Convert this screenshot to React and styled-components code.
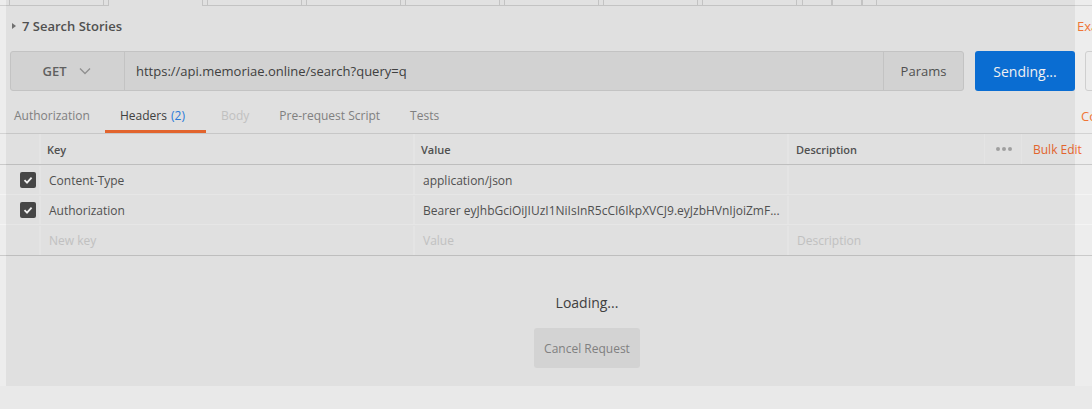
import React from "react";
import styled, { createGlobalStyle } from "styled-components";

const GlobalStyle = createGlobalStyle`
	html, body {
		margin: 0;
		padding: 0;
		overflow: hidden;
		background: #ededed;
	}
	body {
		width: 1092px;
		height: 409px;
		font-family: "Open Sans", "Liberation Sans", sans-serif;
	}
`;

const Page = styled.div`
	position: relative;
	width: 1174px;
	height: 409px;
	background: #ededed;
	color: #555;
`;

const Overlay = styled.div`
	position: absolute;
	left: 6px;
	top: 0;
	width: 1069px;
	height: 386px;
	background: rgba(0, 0, 0, 0.055);
	pointer-events: none;
`;

const TabStrip = styled.div`
	display: flex;
	height: 6px;
	padding-left: 9px;
	box-shadow: inset 0 -1px 0 #cfcfcf;
`;

const WindowTab = styled.div`
	box-sizing: border-box;
	flex: 0 0 ${(p) => p.$w}px;
	margin-right: ${(p) => p.$gap || 0}px;
	height: 6px;
	border-left: 1px solid #cfcfcf;
	border-right: 1px solid #cfcfcf;
	border-bottom: ${(p) => (p.$active ? "none" : "1px solid #cfcfcf")};
	background: ${(p) => (p.$active ? "#ededed" : "#efefef")};
`;

const TitleRow = styled.div`
	display: flex;
	align-items: center;
	height: 40px;
	margin-bottom: 5px;
`;

const TitleArea = styled.div`
	flex: 0 0 1077px;
	display: flex;
	align-items: center;
	padding-left: 12px;
	box-sizing: border-box;
`;

const Caret = styled.span`
	width: 0;
	height: 0;
	border-top: 3.5px solid transparent;
	border-bottom: 3.5px solid transparent;
	border-left: 4px solid #777;
	margin-right: 6px;
`;

const Title = styled.span`
	font-size: 13px;
	font-weight: 600;
	color: #555;
`;

const SideLink = styled.span`
	font-size: 13px;
	color: #f07536;
	white-space: nowrap;
`;

const RequestRow = styled.div`
	display: flex;
	height: 40px;
	padding-left: 10px;
	& > * {
		flex-shrink: 0;
	}
`;

const UrlBar = styled.div`
	display: flex;
	width: 954px;
	box-sizing: border-box;
	border: 1px solid #cfcfcf;
	border-radius: 3px;
	background: #dfdfdf;
	overflow: hidden;
`;

const MethodSelect = styled.div`
	flex: 0 0 114px;
	display: flex;
	align-items: center;
	justify-content: center;
	gap: 12px;
	padding-right: 2px;
	box-sizing: border-box;
	border-right: 1px solid #cfcfcf;
	font-size: 13px;
	font-weight: 600;
	color: #666;
`;

const UrlInput = styled.div`
	flex: 1;
	display: flex;
	align-items: center;
	padding-left: 11px;
	font-size: 13px;
	color: #444;
`;

const ParamsButton = styled.div`
	flex: 0 0 79px;
	display: flex;
	align-items: center;
	justify-content: center;
	border-left: 1px solid #cfcfcf;
	font-size: 13px;
	color: #555;
`;

const SendButton = styled.div`
	width: 100px;
	margin-left: 11px;
	display: flex;
	align-items: center;
	justify-content: center;
	border-radius: 3px;
	background: #0b74df;
	color: #fff;
	font-size: 14px;
`;

const SaveButton = styled.div`
	width: 100px;
	margin-left: 10px;
	box-sizing: border-box;
	border: 1px solid #cfcfcf;
	border-radius: 3px;
	background: #ececec;
`;

const TabsRow = styled.div`
	display: flex;
	height: 43px;
	box-sizing: border-box;
	border-bottom: 1px solid #d3d3d3;
`;

const TabList = styled.div`
	flex: 0 0 1082px;
	display: flex;
	margin-left: -1px;
`;

const ReqTab = styled.div`
	box-sizing: border-box;
	height: 42px;
	padding: 16px ${(p) => p.$padRight || 15}px 0 15px;
	line-height: 18px;
	font-size: 12px;
	white-space: nowrap;
	color: ${(p) => (p.$active ? "#444" : p.$disabled ? "#ccc" : "#888")};
	border-bottom: 3px solid ${(p) => (p.$active ? "#f06a30" : "transparent")};
`;

const Count = styled.span`
	color: #2d82e6;
	margin-left: 1px;
`;

const CookiesLink = styled(SideLink)`
	padding-top: 16px;
	line-height: 18px;
`;

const HeaderRow = styled.div`
	display: flex;
	height: 31px;
	box-sizing: border-box;
	border-bottom: 1px solid #cacaca;
	font-size: 11px;
	font-weight: 600;
	color: #555;
`;

const Row = styled.div`
	display: flex;
	height: ${(p) => (p.$last ? 31 : 30)}px;
	box-sizing: border-box;
	padding-top: 1px;
	border-bottom: 1px solid ${(p) => (p.$last ? "#cacaca" : "#f4f4f4")};
	font-size: 12px;
	color: #555;
`;

const Cell = styled.div`
	box-sizing: border-box;
	flex: ${(p) => (p.$w ? `0 0 ${p.$w}px` : "1")};
	display: flex;
	align-items: center;
	padding-left: ${(p) => p.$pad ?? 8}px;
	border-right: ${(p) => (p.$noLine ? "none" : "2px solid #f2f2f2")};
	white-space: nowrap;
	overflow: hidden;
	color: ${(p) => (p.$placeholder ? "#ccc" : "inherit")};
`;

const HeadCell = styled(Cell)`
	${(p) => p.$short && "border-right: none; box-shadow: inset -1px 0 0 #f2f2f2;"}
`;

const CheckBox = styled.span`
	width: 16px;
	height: 16px;
	border-radius: 2px;
	background: #4c4c4c;
	display: flex;
	align-items: center;
	justify-content: center;
`;

const BulkEdit = styled.span`
	font-size: 12px;
	font-weight: 400;
	color: #f06a30;
`;

const ResponseArea = styled.div`
	height: 130px;
	display: flex;
	flex-direction: column;
	align-items: center;
	padding-top: 37px;
	box-sizing: border-box;
`;

const LoadingText = styled.div`
	font-size: 14px;
	line-height: 20px;
	color: #444;
`;

const CancelButton = styled.div`
	margin-top: 15px;
	width: 106px;
	height: 40px;
	display: flex;
	align-items: center;
	justify-content: center;
	border-radius: 3px;
	background: #e0e0e0;
	color: #888;
	font-size: 12px;
`;

const Footer = styled.div`
	height: 23px;
	background: #e9e9e9;
`;

const Chevron = () => (
	<svg width="12" height="8" viewBox="0 0 12 8">
		<path d="M1 1.5 L6 6.5 L11 1.5" fill="none" stroke="#999" strokeWidth="1.4" />
	</svg>
);

const Check = () => (
	<svg width="12" height="12" viewBox="0 0 12 12">
		<path d="M2.5 6.2 L5 8.6 L9.6 3.6" fill="none" stroke="#fff" strokeWidth="1.8" />
	</svg>
);

const Dots = () => (
	<svg width="16" height="4" viewBox="0 0 16 4">
		<circle cx="2" cy="2" r="2" fill="#a9a9a9" />
		<circle cx="8" cy="2" r="2" fill="#a9a9a9" />
		<circle cx="14" cy="2" r="2" fill="#a9a9a9" />
	</svg>
);

const windowTabs = [
	{ w: 95, gap: 4 },
	{ w: 95, gap: 4, active: true },
	{ w: 95, gap: 4 },
	{ w: 95, gap: 4 },
	{ w: 95, gap: 4 },
	{ w: 95, gap: 4 },
	{ w: 95, gap: 4 },
	{ w: 95, gap: 5 },
	{ w: 30 },
	{ w: 30 },
	{ w: 15 },
];

const headers = [
	{ key: "Content-Type", value: "application/json" },
	{
		key: "Authorization",
		value: "Bearer eyJhbGciOiJIUzI1NiIsInR5cCI6IkpXVCJ9.eyJzbHVnIjoiZmF...",
	},
];

const App = () => {
	return (
		<>
			<GlobalStyle />
			<Page>
				<TabStrip>
					{windowTabs.map((t, i) => (
						<WindowTab key={i} $w={t.w} $gap={t.gap} $active={t.active} />
					))}
				</TabStrip>

				<TitleRow>
					<TitleArea>
						<Caret />
						<Title>7 Search Stories</Title>
					</TitleArea>
					<SideLink>Examples (0)</SideLink>
				</TitleRow>

				<RequestRow>
					<UrlBar>
						<MethodSelect>
							GET
							<Chevron />
						</MethodSelect>
						<UrlInput>https://api.memoriae.online/search?query=q</UrlInput>
						<ParamsButton>Params</ParamsButton>
					</UrlBar>
					<SendButton>Sending...</SendButton>
					<SaveButton />
				</RequestRow>

				<TabsRow>
					<TabList>
						<ReqTab>Authorization</ReqTab>
						<ReqTab $active $padRight={21}>
							Headers <Count>(2)</Count>
						</ReqTab>
						<ReqTab $disabled>Body</ReqTab>
						<ReqTab>Pre-request Script</ReqTab>
						<ReqTab>Tests</ReqTab>
					</TabList>
					<CookiesLink>Cookies</CookiesLink>
				</TabsRow>

				<HeaderRow>
					<HeadCell $w={41} $pad={0} />
					<HeadCell $w={374} $pad={6}>Key</HeadCell>
					<HeadCell $w={374} $pad={6}>Value</HeadCell>
					<HeadCell $w={196} $pad={7} $short>Description</HeadCell>
					<HeadCell $w={37} $pad={11} $short>
						<Dots />
					</HeadCell>
					<HeadCell $pad={11} $noLine>
						<BulkEdit>Bulk Edit</BulkEdit>
					</HeadCell>
				</HeaderRow>

				{headers.map((h) => (
					<Row key={h.key}>
						<Cell $w={41} $pad={20}>
							<CheckBox>
								<Check />
							</CheckBox>
						</Cell>
						<Cell $w={374}>{h.key}</Cell>
						<Cell $w={374}>{h.value}</Cell>
						<Cell $noLine />
					</Row>
				))}
				<Row $last>
					<Cell $w={41} $pad={0} />
					<Cell $w={374} $placeholder>New key</Cell>
					<Cell $w={374} $placeholder>Value</Cell>
					<Cell $placeholder $noLine>Description</Cell>
				</Row>

				<ResponseArea>
					<LoadingText>Loading...</LoadingText>
					<CancelButton>Cancel Request</CancelButton>
				</ResponseArea>
				<Footer />

				<Overlay />
			</Page>
		</>
	);
};

export default App;
